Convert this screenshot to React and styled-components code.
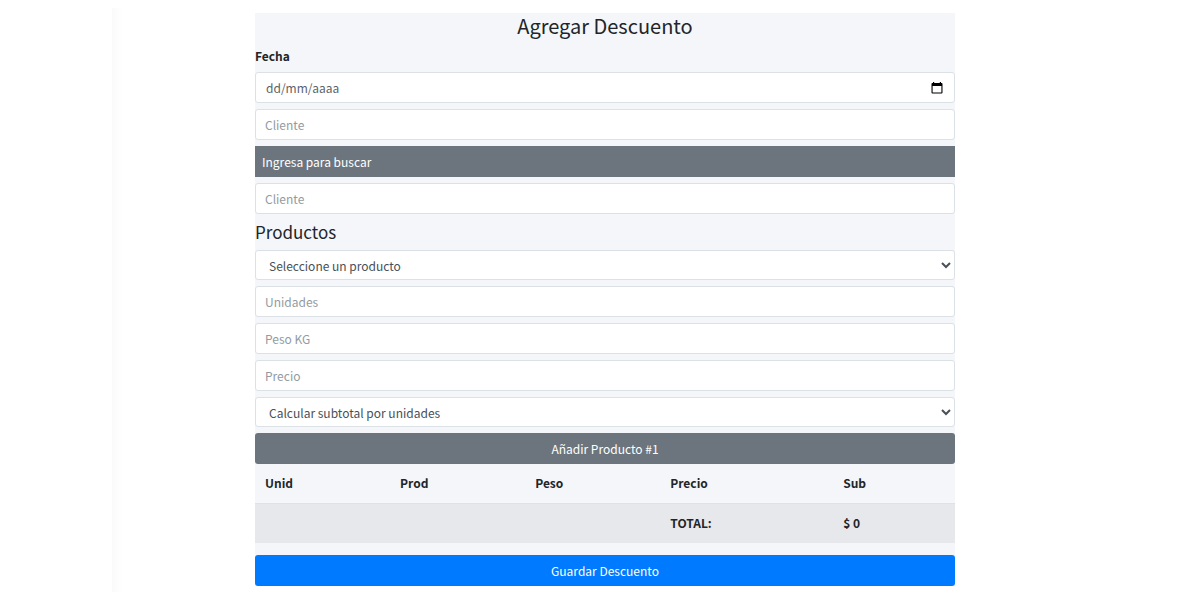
import React from "react";
import styled, { createGlobalStyle, css } from "styled-components";

const GlobalStyle = createGlobalStyle`
  *, *::before, *::after { box-sizing: border-box; }
  body {
    margin: 0;
    background: #fff;
    color: #212529;
    font-family: "Noto Sans CJK SC", "Noto Sans", sans-serif;
    font-size: 12px;
    line-height: 18px;
  }
  button, input, select { font: inherit; }
`;

const Page = styled.main`
  margin: 8px 102px 8px 112px;
  padding: 5px 16px 6px;
  background: linear-gradient(to right, #fafafa, #fdfdfd 6px, #fff 11px);
`;

const Form = styled.form`
  display: flex;
  flex-direction: column;
  gap: 6px;
  max-width: 700px;
  margin: 0 auto;
  background: #f4f6f9;
`;

const Title = styled.h1`
  margin: 0;
  padding-bottom: 2px;
  font-size: 20px;
  font-weight: 400;
  line-height: 26px;
  text-align: center;
`;

const Subtitle = styled.h2`
  margin: 0;
  font-size: 17px;
  font-weight: 400;
  line-height: 24px;
`;

const Label = styled.label`
  padding-bottom: 1px;
  font-weight: 700;
`;

const field = css`
  width: 100%;
  height: 31px;
  border: 1px solid #dce1e6;
  border-radius: 3px;
  background: #fff;
  color: #495057;
`;

const TextInput = styled.input`
  ${field}
  padding: 0 9px;
  &::placeholder { color: #939ba2; opacity: 1; }
`;

const DateField = styled.div`
  ${field}
  display: flex;
  align-items: center;
  padding: 0 10px;
`;

const DateInput = styled.input`
  flex: 1;
  min-width: 0;
  padding: 0;
  border: 0;
  outline: 0;
  background: none;
  color: inherit;
  &::placeholder { color: #5c6369; opacity: 1; }
`;

const CalendarButton = styled.button`
  display: flex;
  padding: 0;
  border: 0;
  background: none;
  color: #000;
`;

const Select = styled.select`
  ${field}
  height: 30px;
  padding: 0 0 0 9px;
`;

const SearchHint = styled.div`
  display: flex;
  align-items: center;
  height: 31px;
  padding: 0 7px;
  background: #6c757d;
  color: #fff;
`;

const Button = styled.button`
  height: 31px;
  padding: 0 8px;
  border: 0;
  border-radius: 3px;
  background: ${(p) => (p.$primary ? "#007bff" : "#6c757d")};
  color: #fff;
`;

const TableBlock = styled.div`
  display: flex;
  flex-direction: column;
  gap: 12px;
`;

const AddBlock = styled.div`
  display: flex;
  flex-direction: column;
`;

const Table = styled.table`
  width: 100%;
  table-layout: fixed;
  border-collapse: collapse;
`;

const Col = styled.col`
  width: ${(p) => p.$width};
`;

const Cell = styled.th`
  height: ${(p) => (p.$total ? "40px" : "39px")};
  padding: 0 10px;
  border-top: ${(p) => (p.$total ? "1px solid #dee2e6" : "0")};
  background: ${(p) => (p.$total ? "#e7e8eb" : "transparent")};
  font-weight: 700;
  text-align: left;
`;

const columns = [
  { name: "Unid", width: "19.3%" },
  { name: "Prod", width: "19.3%" },
  { name: "Peso", width: "19.3%" },
  { name: "Precio", width: "24.7%" },
  { name: "Sub", width: "17.4%" },
];

function CalendarIcon() {
  return (
    <svg width="14" height="14" viewBox="0 0 14 14" aria-hidden="true">
      <path
        fill="currentColor"
        fillRule="evenodd"
        d="M3 1h1.2v1h5.6V1H11v1h.6q.9 0 .9.9v8.7q0 .9-.9.9H2.4q-.9 0-.9-.9V2.9q0-.9.9-.9H3zM2.6 5v6.4h8.8V5z"
      />
    </svg>
  );
}

export default function App() {
  return (
    <>
      <GlobalStyle />
      <Page>
        <Form onSubmit={(e) => e.preventDefault()}>
          <Title>Agregar Descuento</Title>
          <Label htmlFor="fecha">Fecha</Label>
          <DateField>
            <DateInput id="fecha" type="text" placeholder="dd/mm/aaaa" />
            <CalendarButton type="button" aria-label="Abrir calendario">
              <CalendarIcon />
            </CalendarButton>
          </DateField>
          <TextInput aria-label="Buscar cliente" placeholder="Cliente" />
          <SearchHint>Ingresa para buscar</SearchHint>
          <TextInput aria-label="Cliente" placeholder="Cliente" />
          <Subtitle>Productos</Subtitle>
          <Select aria-label="Producto">
            <option>Seleccione un producto</option>
          </Select>
          <TextInput aria-label="Unidades" placeholder="Unidades" />
          <TextInput aria-label="Peso KG" placeholder="Peso KG" />
          <TextInput aria-label="Precio" placeholder="Precio" />
          <Select aria-label="Subtotal">
            <option>Calcular subtotal por unidades</option>
          </Select>
          <TableBlock>
            <AddBlock>
              <Button type="button">Añadir Producto #1</Button>
              <Table>
                <colgroup>
                  {columns.map((c) => (
                    <Col key={c.name} $width={c.width} />
                  ))}
                </colgroup>
                <thead>
                  <tr>
                    {columns.map((c) => (
                      <Cell key={c.name} scope="col">{c.name}</Cell>
                    ))}
                  </tr>
                </thead>
                <tbody>
                  <tr>
                    <Cell as="td" $total colSpan={3} />
                    <Cell $total scope="row">TOTAL:</Cell>
                    <Cell as="td" $total>$ 0</Cell>
                  </tr>
                </tbody>
              </Table>
            </AddBlock>
            <Button type="submit" $primary>Guardar Descuento</Button>
          </TableBlock>
        </Form>
      </Page>
    </>
  );
}
